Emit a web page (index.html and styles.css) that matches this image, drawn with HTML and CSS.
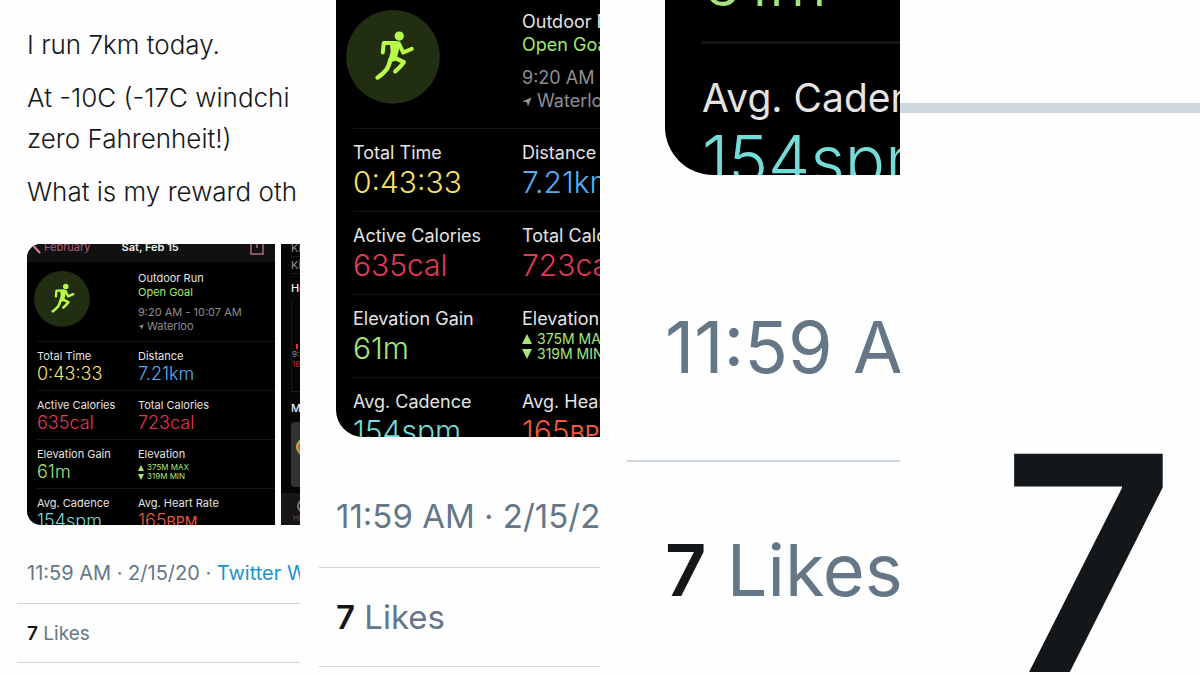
FILE: index.html
```html
<!DOCTYPE html>
<html lang="en">
<head>
<meta charset="utf-8">
<meta name="viewport" content="width=device-width, initial-scale=1">
<title>I run 7km today.</title>
<link rel="stylesheet" href="styles.css">
</head>
<body>
<svg class="sprite" aria-hidden="true">
  <symbol id="runner" viewBox="18 30 284 285">
    <circle cx="160" cy="172" r="142" fill="#222e12"/>
    <g fill="none" stroke="#b9fa4b" stroke-linecap="round" stroke-linejoin="round">
      <path stroke-width="12" d="M166 130H132L129 159"/>
      <path stroke-width="12" d="M178 132L191 159L217 148"/>
      <path stroke-width="13" d="M152 180Q148 200 140 211Q128 226 113 235"/>
      <path stroke-width="13" d="M163 174L193 188Q182 204 167 216"/>
    </g>
    <path fill="#b9fa4b" d="M150 127L170 124Q181 124 182 134L173 170L168 184L145 190L153 155Z"/>
    <circle cx="179" cy="109" r="14" fill="#b9fa4b"/>
  </symbol>
  <symbol id="pin" viewBox="0 0 10 10">
    <path fill="#96969a" d="M9.500 0.500L6 9.500L4.800 5.200L0.500 4.200Z"/>
  </symbol>
</svg>

<main class="strip">
  <article class="panel panel-full">
    <div class="tweet">
      <p>I run 7km today.</p>
      <p>At -10C (-17C windchi<br>zero Fahrenheit!)</p>
      <p>What is my reward oth</p>
    </div>
    <div class="media">
      <section class="card">
        <header class="card-head">
          <svg class="back" viewBox="0 0 10 16"><path d="M1 6L9 15" fill="none" stroke="#e0869c" stroke-width="2.500"/></svg>
          <span class="month">February</span>
          <strong>Sat, Feb 15</strong>
          <svg class="share" viewBox="0 0 14 16"><path d="M4 3H1V15H13V3H10M7 0V9" fill="none" stroke="#b5667a" stroke-width="1.500"/></svg>
        </header>
        <div class="summary">
          <svg class="runner"><use href="#runner"/></svg>
          <div class="facts">
            <div>Outdoor Run</div>
            <div class="goal">Open Goal</div>
            <div class="muted when">9:20 AM - 10:07 AM</div>
            <div class="muted"><svg class="pin"><use href="#pin"/></svg>Waterloo</div>
          </div>
        </div>
        <dl class="row">
          <div><dt>Total Time</dt><dd class="yellow">0:43:33</dd></div>
          <div><dt>Distance</dt><dd class="blue">7.21km</dd></div>
        </dl>
        <dl class="row">
          <div><dt>Active Calories</dt><dd class="red">635cal</dd></div>
          <div><dt>Total Calories</dt><dd class="red">723cal</dd></div>
        </dl>
        <dl class="row">
          <div><dt>Elevation Gain</dt><dd class="green">61m</dd></div>
          <div><dt>Elevation</dt><dd class="range"><i class="up"></i>375M MAX</dd><dd class="range"><i class="down"></i>319M MIN</dd></div>
        </dl>
        <dl class="row">
          <div><dt>Avg. Cadence</dt><dd class="cyan">154spm</dd></div>
          <div><dt>Avg. Heart Rate</dt><dd class="orange">165<small>BPM</small></dd></div>
        </dl>
      </section>
      <section class="side">
        <div class="split">Ki</div>
        <div class="split">Ki</div>
        <h2>He</h2>
        <div class="chart"><i></i><span>9:</span><b>16</b></div>
        <h2>M</h2>
        <div class="map"><i></i></div>
        <div class="tab"><i></i><span>Hi</span></div>
      </section>
    </div>
    <div class="stamp">11:59 AM · 2/15/20 · <a href="#">Twitter W</a></div>
    <div class="likes"><b>7</b> Likes</div>
  </article>

  <article class="panel panel-mid">
    <section class="card">
      <div class="summary">
        <svg class="runner"><use href="#runner"/></svg>
        <div class="facts">
          <div>Outdoor Run</div>
          <div class="goal">Open Goal</div>
          <div class="muted when">9:20 AM -</div>
          <div class="muted"><svg class="pin"><use href="#pin"/></svg>Waterloo</div>
        </div>
      </div>
      <dl class="row">
        <div><dt>Total Time</dt><dd class="yellow">0:43:33</dd></div>
        <div><dt>Distance</dt><dd class="blue">7.21km</dd></div>
      </dl>
      <dl class="row">
        <div><dt>Active Calories</dt><dd class="red">635cal</dd></div>
        <div><dt>Total Calories</dt><dd class="red">723cal</dd></div>
      </dl>
      <dl class="row">
        <div><dt>Elevation Gain</dt><dd class="green">61m</dd></div>
        <div><dt>Elevation</dt><dd class="range"><i class="up"></i>375M MAX</dd><dd class="range"><i class="down"></i>319M MIN</dd></div>
      </dl>
      <dl class="row">
        <div><dt>Avg. Cadence</dt><dd class="cyan">154spm</dd></div>
        <div><dt>Avg. Heart</dt><dd class="orange">165<small>BPM</small></dd></div>
      </dl>
    </section>
    <div class="stamp">11:59 AM · 2/15/2</div>
    <div class="likes"><b>7</b> Likes</div>
  </article>

  <article class="panel panel-close">
    <section class="card">
      <dl class="row first">
        <div><dd class="green">61m</dd></div>
      </dl>
      <dl class="row">
        <div><dt>Avg. Cadence</dt><dd class="cyan">154spm</dd></div>
      </dl>
    </section>
    <div class="stamp">11:59 A</div>
    <div class="likes"><b>7</b> Likes</div>
  </article>

  <article class="panel panel-macro">
    <hr>
    <div class="seven">7</div>
  </article>
</main>
</body>
</html>
```
FILE: styles.css
```css
* { box-sizing: border-box; }
body {
  margin: 0;
  background: #fefefe;
  color: #14171a;
  font-family: Inter, "Liberation Sans", sans-serif;
}
p, dl, dd, h2 { margin: 0; }
.sprite { position: absolute; width: 0; height: 0; }

.strip {
  display: grid;
  grid-template-columns: repeat(4, minmax(0, 1fr));
  height: 100vh;
}
.panel { overflow: hidden; white-space: nowrap; }

.panel-full {
  --inset: 27px; --rule-inset: 17px;
  --col-1: 10px; --col-2: 111px;
  --badge: 56px; --badge-left: 7px;
  --label: 11px; --label-line: 14px;
  --value: 18px; --value-line: 22px; --unit: 14px;
  --small: 8px; --small-line: 9px; --mark: 3px; --range-top: 2px;
  --row-pad: 7px; --row-gap: 5px;
  --meta: 20px; --border: 1px;
}
.panel-mid {
  --inset: 36px; --rule-inset: 19px;
  --col-1: 17px; --col-2: 186px;
  --badge: 94px; --badge-left: 10px;
  --label: 18px; --label-line: 24px;
  --value: 30px; --value-line: 34px; --unit: 23px;
  --small: 14px; --small-line: 15px; --mark: 5px; --range-top: 0;
  --row-pad: 12px; --row-gap: 12px;
  --meta: 33px; --border: 1px;
}
.panel-close {
  --inset: 65px; --rule-inset: 27px;
  --col-1: 37px; --col-2: 400px;
  --label: 39px; --label-line: 52px;
  --value: 67px; --value-line: 72px;
  --row-pad: 28px; --row-gap: 28px;
  --meta: 72px; --border: 3px;
}

/* Tweet text */
.tweet {
  display: grid;
  gap: 12px;
  padding: 24px 0 32px var(--inset);
  font-size: 26px;
  font-weight: 300;
  line-height: 41px;
}

/* Photos */
.media {
  display: grid;
  grid-template-columns: 248px 248px;
  gap: 6px;
  height: 281px;
  margin-left: var(--inset);
  overflow: hidden;
  border-radius: 14px 0 0 14px;
}
.card { overflow: hidden; background: #000; color: #e4e4e4; font-size: var(--label); }
.card-head {
  display: flex;
  align-items: center;
  height: 26px;
  margin-top: -8px;
  padding: 0 11px 4px 5px;
  background: #111;
}
.back { width: 9px; height: 14px; }
.month { margin-left: 3px; color: #b85b72; }
.card-head strong { margin: 0 auto 0 31px; color: #eee; font-weight: 600; }
.share { width: 14px; height: 16px; }

.summary { display: flex; padding: 9px 0 8px var(--badge-left); }
.runner { flex: none; width: var(--badge); height: var(--badge); }
.facts { flex: none; margin-left: calc(var(--col-2) - var(--badge-left) - var(--badge)); line-height: var(--label-line); }
.goal { color: #a3e868; }
.muted { color: #8e8e92; }
.when { margin-top: 6px; }
.pin { width: 6px; height: 6px; margin-right: 3px; }

.row {
  display: grid;
  grid-template-columns: calc(var(--col-2) - var(--col-1)) 1fr;
  margin-left: var(--col-1);
  padding: var(--row-pad) 0 var(--row-gap);
  border-top: var(--border) solid #151515;
}
dt { line-height: var(--label-line); }
dd { font-size: var(--value); font-weight: 300; line-height: var(--value-line); }
dd small { font-size: var(--unit); font-weight: 400; }
.yellow { color: #f6e36a; }
.blue { color: #55aef2; }
.red { color: #e03a58; }
.green { color: #a6e57c; }
.cyan { color: #74ddd8; }
.orange { color: #f0593c; }
.range {
  display: flex;
  align-items: center;
  gap: var(--mark);
  color: #a6e57c;
  font-size: var(--small);
  font-weight: 400;
  line-height: var(--small-line);
}
dt + .range { margin-top: var(--range-top); }
.up, .down { border: var(--mark) solid transparent; border-width: 0 var(--mark); }
.up { border-bottom: calc(var(--mark) * 2) solid #a6e57c; }
.down { border-top: calc(var(--mark) * 2) solid #a6e57c; }

.side { padding-left: 10px; background: #050505; color: #8e8e92; font-size: 11px; }
.split { height: 17px; line-height: 17px; border-bottom: 1px solid #1c1c1c; }
.split:first-child { height: 13px; line-height: 8px; }
.side h2 { margin-top: 6px; color: #eee; font-size: 11px; font-weight: 500; line-height: 16px; }
.chart {
  display: grid;
  align-content: end;
  height: 92px;
  margin-top: 4px;
  padding-bottom: 22px;
  border-left: 1px solid #141414;
  border-bottom: 1px solid #1c1c1c;
  font-size: 8px;
  line-height: 10px;
}
.chart i { width: 2px; height: 5px; margin-left: 4px; background: #e8303c; }
.chart b { color: #c9283a; font-weight: 400; }
.side .chart + h2 { margin-top: 8px; }
.map { height: 65px; margin-top: 6px; padding: 16px 0 0 5px; overflow: hidden; border-radius: 4px; background: #323236; }
.map i { display: block; width: 18px; height: 18px; border: 2px solid #a9b34a; border-radius: 50%; background: #e8523f; }
.tab { height: 40px; margin: 6px 0 0 -10px; padding: 6px 0 0 12px; background: #161616; font-size: 8px; line-height: 10px; color: #55555a; }
.tab i { display: block; width: 14px; height: 14px; margin-left: 4px; border: 2px solid #777; border-radius: 50%; }

/* Meta lines */
.stamp, .likes {
  margin-left: var(--rule-inset);
  padding-left: calc(var(--inset) - var(--rule-inset));
  color: #657786;
  font-size: var(--meta);
  border-bottom: 1px solid #ccd6dd;
}
.stamp a { color: #1b95c9; text-decoration: none; }
.likes b { color: #14171a; font-weight: 600; }
.panel-full .stamp { height: 79px; padding-top: 36px; line-height: 24px; font-size: 19px; }
.panel-full .stamp { font-size: var(--meta); }
.panel-full .likes { height: 59px; line-height: 59px; font-size: 19px; }

.panel-mid .card { height: 437px; margin-left: var(--inset); border-radius: 0 0 0 27px; }
.panel-mid .summary { padding: 10px 0 16px var(--badge-left); }
.panel-mid .facts { line-height: 23px; }
.panel-mid .when { margin-top: 10px; }
.panel-mid .pin { width: 10px; height: 10px; margin-right: 5px; }
.panel-mid .stamp { height: 131px; padding-top: 60px; line-height: 38px; }
.panel-mid .likes { height: 99px; line-height: 98px; }

.panel-close .card { height: 175px; margin-left: var(--inset); border-radius: 0 0 0 48px; }
.panel-close .first { height: 41px; padding: 0; border: 0; }
.panel-close .first dd { margin-top: -54px; }
.panel-close .stamp { height: 287px; padding-top: 130px; line-height: 84px; border-width: 2px; }
.panel-close .likes { padding-top: 66px; line-height: 84px; border: 0; }

.panel-macro hr { height: 10px; margin: 103px 0 0; border: 0; background: #ced7df; }
.seven { padding: 300px 0 0 102px; font-size: 300px; font-weight: 600; line-height: 300px; }
```
